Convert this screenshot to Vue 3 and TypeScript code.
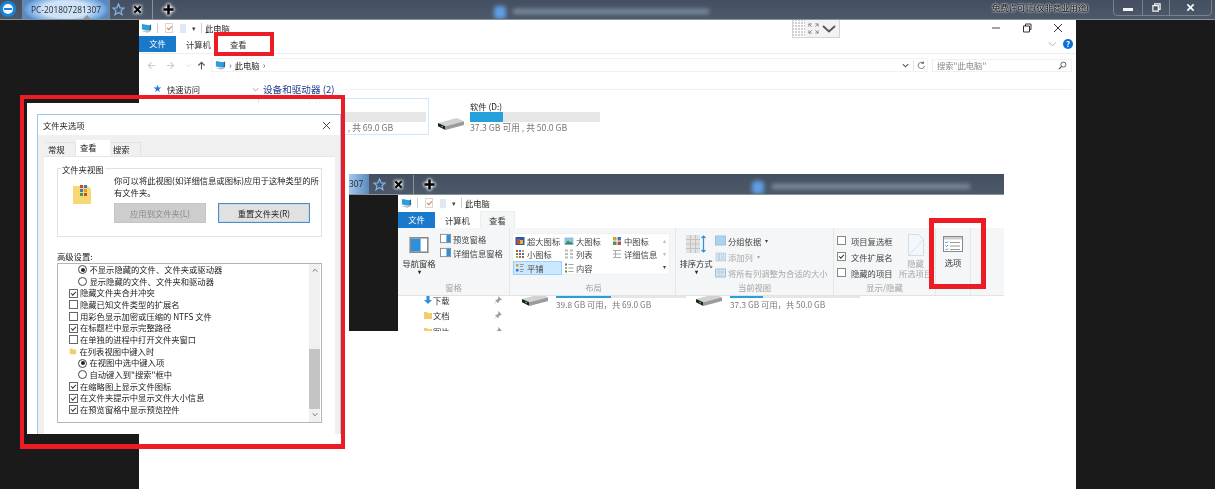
<template>
  <div class="screen">
    <svg class="defs" aria-hidden="true">
      <symbol id="pc" viewBox="0 0 12 12">
        <path d="M1 1l8 1.500v6L1 7z" fill="#2a9fdc" />
        <path d="M9 2.500l2 -1v6l-2 1z" fill="#16689c" />
        <path d="M1 9l6 1.500 4-1.500-5-1z" fill="#b9c0c6" />
      </symbol>
      <symbol id="drive" viewBox="0 0 30 14">
        <path d="M1 6.500L21 1l8 3.500L9 10z" fill="#d2d2d2" />
        <path d="M1 6.500L9 10v4L1 10z" fill="#1f1f1f" />
        <path d="M9 10L29 4.500v4L9 14z" fill="#9b9b9b" />
        <rect x="4.500" y="9.500" width="2" height="1.500" fill="#34c05a" />
      </symbol>
      <symbol id="star" viewBox="0 0 14 14">
        <path d="M7 1l1.700 4.200 4.300.300-3.300 2.800 1 4.300L7 10.300l-3.700 2.300 1-4.300L1 5.500l4.300-.300z" fill="none" stroke="#7fb4e6" stroke-width="1.300" />
      </symbol>
      <symbol id="tvx" viewBox="0 0 10 10">
        <path d="M1.500 1.500l7 7M8.500 1.500l-7 7" stroke="#050505" stroke-width="2.300" />
      </symbol>
      <symbol id="tvplus" viewBox="0 0 12 12">
        <path d="M6 .5v11M.5 6h11" stroke="#050505" stroke-width="2.800" />
      </symbol>
      <symbol id="xlg" viewBox="0 0 10 10">
        <rect x=".5" y="1" width="9" height="8" fill="#1e5fb0" />
        <rect x="2" y="3" width="3" height="5" fill="#d9442e" />
        <rect x="5" y="4" width="3" height="4" fill="#e6b52e" />
      </symbol>
      <symbol id="lg" viewBox="0 0 10 10">
        <rect x=".5" y="1.500" width="9" height="7" fill="#8fc4e8" />
        <path d="M.5 8.500L4 4.500l2 2 1-1 2.500 3z" fill="#3d8a5a" />
      </symbol>
      <symbol id="md" viewBox="0 0 10 10">
        <rect x="1" y="1" width="3.500" height="3.500" fill="#d9a02e" />
        <rect x="5.500" y="1" width="3.500" height="3.500" fill="#3b78c4" />
        <rect x="1" y="5.500" width="3.500" height="3.500" fill="#3b9a5c" />
        <rect x="5.500" y="5.500" width="3.500" height="3.500" fill="#c9483a" />
      </symbol>
      <symbol id="sm" viewBox="0 0 10 10">
        <g v-for="c in smallGrid" :key="c.k">
          <rect :x="c.x" :y="c.y" width="2" height="2" :fill="c.f" />
        </g>
      </symbol>
      <symbol id="list" viewBox="0 0 10 10">
        <path d="M1 1.500h3M1 5h3M1 8.500h3M6 1.500h3M6 5h3M6 8.500h3" stroke="#bbb" stroke-width="2" />
      </symbol>
      <symbol id="detail" viewBox="0 0 10 10">
        <path d="M1 1.500h8M1 5h8M1 8.500h8M3.500 1v8" stroke="#aaa" stroke-width="1" fill="none" />
      </symbol>
      <symbol id="tile" viewBox="0 0 10 10">
        <rect x="1" y="1" width="2.500" height="2.500" fill="#d9a02e" />
        <rect x="1" y="6" width="2.500" height="2.500" fill="#3b78c4" />
        <path d="M5 1.500h4M5 3.500h3M5 6.500h4M5 8.500h3" stroke="#888" stroke-width=".8" />
      </symbol>
      <symbol id="content" viewBox="0 0 10 10">
        <rect x="1" y=".5" width="2" height="2" fill="#3b78c4" />
        <rect x="1" y="4" width="2" height="2" fill="#d9a02e" />
        <rect x="1" y="7.500" width="2" height="2" fill="#3b9a5c" />
        <path d="M4.500 1.500h5M4.500 5h5M4.500 8.500h5" stroke="#999" stroke-width=".9" />
      </symbol>
      <symbol id="pane" viewBox="0 0 12 10">
        <rect x=".5" y=".5" width="11" height="9" fill="#fff" stroke="#8a8a8a" />
        <rect x="1" y="1" width="6" height="8" fill="#2e8fdc" />
      </symbol>
      <symbol id="pane-r" viewBox="0 0 12 10">
        <rect x=".5" y=".5" width="11" height="9" fill="#fff" stroke="#8a8a8a" />
        <rect x="7" y="1" width="4" height="8" fill="#2e8fdc" />
      </symbol>
      <symbol id="pin" viewBox="0 0 8 8">
        <path d="M4.500 .5l3 3-1.500.5-1.500 1.500-.3 1.500L1.500 4.300 3 4l1.500-1.500z M2.500 5.500L.5 7.500" fill="#9a9a9a" stroke="#9a9a9a" stroke-width=".5" />
      </symbol>
      <symbol id="folder" viewBox="0 0 10 10">
        <path d="M1 2h3l1 1h4v6H1z" fill="#f3cd6c" />
      </symbol>
      <symbol id="down" viewBox="0 0 10 10">
        <path d="M3.500 1h3v4H9L5 9 1 5h2.500z" fill="#2e8fdc" />
      </symbol>
    </svg>

    <header class="tv-bar">
      <span class="tv-logo"><i /></span>
      <div class="tv-tab">
        <span>PC-201807281307</span>
        <b class="tv-notch" />
      </div>
      <svg class="tv-star"><use href="#star" /></svg>
      <svg class="tv-x"><use href="#tvx" /></svg>
      <span class="tv-sep" />
      <svg class="tv-plus"><use href="#tvplus" /></svg>
      <span class="tv-blur-icon tv-blur-main" />
      <span class="tv-blur-text" />
      <span class="tv-license">免费许可证(仅非商业用途)</span>
      <div class="tv-winbox">
        <span class="wb wb-min"><i /></span>
        <span class="wb wb-max">
          <svg viewBox="0 0 10 10"><path d="M3 3V1h6v6H7M1 3h6v6H1z" fill="none" stroke="#f4f4f4" stroke-width="1.400" /></svg>
        </span>
        <span class="wb wb-close">
          <svg viewBox="0 0 10 10"><path d="M1.500 1.500l7 7M8.500 1.500l-7 7" stroke="#f4f4f4" stroke-width="2" /></svg>
        </span>
      </div>
    </header>

    <main class="desk">
      <section class="explorer">
        <div class="title-row">
          <svg class="ic12"><use href="#pc" /></svg>
          <span class="qa-sep" />
          <span class="qa-doc"><i /></span>
          <span class="qa-page" />
          <span class="qa-caret">▾</span>
          <span class="qa-sep" />
          <span class="crumb-title">此电脑</span>
          <span class="win-ctrls">
            <svg viewBox="0 0 10 10"><path d="M1 5h8" stroke="#444" stroke-width="1" /></svg>
            <svg viewBox="0 0 10 10"><path d="M1.500 3h6v6h-6zM3.500 3V1h5.500v5.500H7.500" fill="none" stroke="#333" /></svg>
            <svg viewBox="0 0 10 10"><path d="M1 1l8 8M9 1l-8 8" stroke="#333" /></svg>
          </span>
        </div>
        <div class="tab-row">
          <span class="tab-file">文件</span>
          <span class="tab">计算机</span>
          <span class="tab tab-view">查看</span>
          <span class="tab-right">
            <svg viewBox="0 0 10 6"><path d="M1 1l4 4 4-4" fill="none" stroke="#aaa" /></svg>
            <b class="help">?</b>
          </span>
        </div>
        <div class="addr-row">
          <svg class="nav" viewBox="0 0 10 10"><path d="M9 5H1.500M5 1.500L1.500 5 5 8.500" fill="none" stroke="#ccc" stroke-width="1.200" /></svg>
          <svg class="nav" viewBox="0 0 10 10"><path d="M1 5h7.500M5 1.500L8.500 5 5 8.500" fill="none" stroke="#ccc" stroke-width="1.200" /></svg>
          <svg class="nav nav-sm" viewBox="0 0 10 10"><path d="M2 3.500l3 3 3-3" fill="none" stroke="#ccc" /></svg>
          <svg class="nav nav-up" viewBox="0 0 10 10"><path d="M5 9.500V1.500M1.500 5L5 1.500 8.500 5" fill="none" stroke="#555" stroke-width="1.200" /></svg>
          <div class="addr-box">
            <svg class="ic12"><use href="#pc" /></svg>
            <span class="chev">›</span>
            <span>此电脑</span>
            <span class="chev">›</span>
            <span class="addr-tools">
              <svg viewBox="0 0 10 10"><path d="M2 3.500l3 3 3-3" fill="none" stroke="#555" stroke-width="1.200" /></svg>
              <i />
              <svg viewBox="0 0 10 10"><path d="M8.300 5.500A3.500 3.500 0 1 1 7 2.200M7.200 .5v2.300H5" fill="none" stroke="#666" /></svg>
            </span>
          </div>
          <div class="search-box">
            <span>搜索"此电脑"</span>
            <svg viewBox="0 0 10 10"><circle cx="6" cy="4" r="2.800" fill="none" stroke="#555" /><path d="M4 6L1 9" stroke="#555" stroke-width="1.300" /></svg>
          </div>
        </div>
        <div class="exp-body">
          <aside class="side">
            <div class="side-row"><span class="side-star">★</span>快速访问</div>
            <div class="side-row side-next"><svg class="ic10"><use href="#folder" /></svg></div>
          </aside>
          <div class="drives">
            <div class="drive-head">
              <svg viewBox="0 0 10 6"><path d="M1 1l4 4 4-4" fill="none" stroke="#888" /></svg>
              <span>设备和驱动器 (2)</span>
              <i />
            </div>
            <div class="tiles">
              <div
                v-for="d in drives"
                :key="d.name"
                class="tile"
                :class="{ 'tile-on': d.selected }"
              >
                <svg class="drive-ic"><use href="#drive" /></svg>
                <div class="tile-info">
                  <div class="tile-name">{{ d.name }}</div>
                  <div class="bar"><div class="bar-fill" :style="{ width: d.used + '%' }" /></div>
                  <div class="tile-size">{{ d.size }}</div>
                </div>
              </div>
            </div>
          </div>
        </div>
      </section>
    </main>

    <!-- window handle of the remote session -->
    <div class="tv-handle">
      <span class="tv-dots" />
      <svg viewBox="0 0 12 12"><path d="M1 4V1h3M1 1l3 3M8 1h3v3M11 1L8 4M11 8v3H8M11 11L8 8M4 11H1V8M1 11l3-3" fill="none" stroke="#777" stroke-width=".9" /></svg>
      <svg viewBox="0 0 14 8"><path d="M1 1l6 5.500L13 1" fill="none" stroke="#555" stroke-width="1.800" /></svg>
    </div>

    <!-- pasted screenshot: dialog -->
    <div class="dialog-sheet">
      <div class="dialog">
        <div class="dlg-title">
          <span>文件夹选项</span>
          <svg viewBox="0 0 10 10"><path d="M1 1l8 8M9 1l-8 8" stroke="#333" /></svg>
        </div>
        <div class="dlg-body">
          <div class="dlg-tabs">
            <span class="dlg-tab">常规</span>
            <span class="dlg-tab dlg-tab-on">查看</span>
            <span class="dlg-tab">搜索</span>
          </div>
          <div class="dlg-panel">
            <fieldset class="group">
              <legend>文件夹视图</legend>
              <div class="group-inner">
                <svg class="group-ic" viewBox="0 0 18 20">
                  <path d="M0 2h15l3 3v15H0z" fill="#f8d775" />
                  <rect x="7" y="1" width="3" height="3" fill="#c9483a" />
                  <rect x="11" y="1" width="3" height="3" fill="#3b78c4" />
                  <rect x="7" y="5" width="3" height="3" fill="#3b78c4" />
                  <rect x="11" y="5" width="3" height="3" fill="#d9a02e" />
                  <rect x="7" y="9" width="3" height="3" fill="#3b9a5c" />
                  <rect x="11" y="9" width="3" height="3" fill="#c9483a" />
                </svg>
                <div class="group-main">
                  <p>你可以将此视图(如详细信息或图标)应用于这种类型的所<br>有文件夹。</p>
                  <div class="group-btns">
                    <button class="btn btn-off">应用到文件夹(L)</button>
                    <button class="btn btn-on">重置文件夹(R)</button>
                  </div>
                </div>
              </div>
            </fieldset>
            <div class="adv-label">高级设置:</div>
            <div class="adv-box">
              <ul class="adv-rows">
                <li v-for="r in advRows" :key="r.text" :class="'row-' + r.kind">
                  <span v-if="r.kind === 'radio'" class="radio" :class="{ on: r.on }" />
                  <span v-else-if="r.kind === 'check'" class="check" :class="{ on: r.on }" />
                  <svg v-else class="ic8"><use href="#folder" /></svg>
                  {{ r.text }}
                </li>
              </ul>
              <div class="scroll">
                <svg viewBox="0 0 10 6"><path d="M2 4.500l3-3 3 3" fill="none" stroke="#555" /></svg>
                <span class="thumb" />
                <svg viewBox="0 0 10 6"><path d="M2 1.500l3 3 3-3" fill="none" stroke="#555" /></svg>
              </div>
            </div>
          </div>
        </div>
      </div>
    </div>

    <!-- pasted screenshot: explorer ribbon -->
    <div class="nested">
      <div class="tv-bar nested-bar">
        <div class="nested-tab">307</div>
        <svg class="tv-star"><use href="#star" /></svg>
        <svg class="tv-x"><use href="#tvx" /></svg>
        <span class="tv-sep" />
        <svg class="tv-plus"><use href="#tvplus" /></svg>
        <span class="tv-blur-icon nested-blur" />
        <span class="tv-blur-text nested-text" />
      </div>
      <div class="nested-main">
        <div class="nested-black" />
        <div class="nested-exp">
          <div class="title-row nested-title">
            <svg class="ic12"><use href="#pc" /></svg>
            <span class="qa-sep" />
            <span class="qa-doc"><i /></span>
            <span class="qa-page" />
            <span class="qa-caret">▾</span>
            <span class="qa-sep" />
            <span class="crumb-title">此电脑</span>
          </div>
          <div class="tab-row nested-tabs">
            <span class="tab-file">文件</span>
            <span class="tab">计算机</span>
            <span class="tab tab-nview">查看</span>
          </div>
          <div class="ribbon">
            <div class="rb-group rb-pane">
              <div class="rb-items">
                <div class="rb-big">
                  <svg class="big-pane"><use href="#pane" /></svg>
                  <span>导航窗格</span>
                  <b class="dd">▾</b>
                </div>
                <div class="rb-col">
                  <div class="rb-small"><svg class="ic12"><use href="#pane-r" /></svg>预览窗格</div>
                  <div class="rb-small"><svg class="ic12"><use href="#pane-r" /></svg>详细信息窗格</div>
                </div>
              </div>
              <div class="rb-label">窗格</div>
            </div>
            <div class="rb-group rb-layout">
              <div class="gallery">
                <div class="gal-grid">
                  <div
                    v-for="g in layouts"
                    :key="g.text"
                    class="gal-cell"
                    :class="{ 'gal-on': g.on }"
                  >
                    <svg class="ic10"><use :href="'#' + g.icon" /></svg>
                    <span>{{ g.text }}</span>
                  </div>
                </div>
                <div class="gal-scroll">
                  <span>▴</span><span>▾</span><span class="gal-more">▾</span>
                </div>
              </div>
              <div class="rb-label">布局</div>
            </div>
            <div class="rb-group rb-current">
              <div class="rb-items">
                <div class="rb-big rb-sort">
                  <svg class="big-sort" viewBox="0 0 20 18">
                    <rect x="0" y="0" width="14" height="18" fill="#e2e2e2" />
                    <path d="M0 4.500h14M0 9h14M0 13.500h14M4.500 0v18M9.500 0v18" stroke="#bdbdbd" stroke-width=".8" />
                    <path d="M17.500 1v16M15.500 3l2-2 2 2M15.500 15l2 2 2-2" fill="none" stroke="#2e8fdc" stroke-width="1.200" />
                  </svg>
                  <span>排序方式</span>
                  <b class="dd">▾</b>
                </div>
                <div class="rb-col rb-col3">
                  <div class="rb-small"><svg class="ic11" viewBox="0 0 11 11"><rect x=".5" y="1" width="10" height="9" fill="#a8d4f2" stroke="#a9bfd0" /></svg>分组依据 <em>▾</em></div>
                  <div class="rb-small rb-dim"><svg class="ic11" viewBox="0 0 11 11"><path d="M1 2h2.500v8H1zM4.500 2H7v8H4.500zM8 2h2.500v8H8z" fill="#d6e7f4" stroke="#a9bfd0" stroke-width=".6" /></svg>添加列 <em>▾</em></div>
                  <div class="rb-small rb-dim"><svg class="ic11" viewBox="0 0 11 11"><rect x=".5" y="2" width="10" height="8" fill="#d6e7f4" stroke="#a9bfd0" /><path d="M.5 5h10M4 2v8M7 2v8" stroke="#a9bfd0" stroke-width=".6" /></svg>将所有列调整为合适的大小</div>
                </div>
              </div>
              <div class="rb-label">当前视图</div>
            </div>
            <div class="rb-group rb-show">
              <div class="rb-items">
                <div class="rb-col rb-col3">
                  <label v-for="o in showOptions" :key="o.text" class="rb-check">
                    <span class="check check-sm" :class="{ on: o.on }" />{{ o.text }}
                  </label>
                </div>
                <div class="rb-big rb-hide">
                  <svg class="big-hide" viewBox="0 0 16 22"><path d="M.5 .5h10l5 5v16H.5z" fill="#f4f8fc" stroke="#d5dce4" /><path d="M.5 21.500L15.500 5.500" stroke="#cfe3f4" /></svg>
                  <span>隐藏</span>
                  <span>所选项目</span>
                </div>
              </div>
              <div class="rb-label">显示/隐藏</div>
            </div>
            <div class="rb-group rb-opts">
              <div class="rb-big rb-opt">
                <svg class="big-opt" viewBox="0 0 20 16">
                  <rect x=".5" y=".5" width="19" height="15" fill="#fff" stroke="#8a8a8a" />
                  <rect x="1" y="1" width="18" height="2.500" fill="#cfcfcf" />
                  <path d="M2.500 6l1 1 1.500-1.500M2.500 9.500l1 1 1.500-1.500M2.500 13l1 1 1.500-1.500" fill="none" stroke="#2e8fdc" />
                  <path d="M7 6.500h10M7 10h10M7 13.500h10" stroke="#999" />
                </svg>
                <span>选项</span>
              </div>
            </div>
            <div class="rb-fill" />
          </div>
          <div class="nested-content">
            <div class="nested-side">
              <div v-for="s in nestedSide" :key="s.text" class="ns-row">
                <svg class="ic10"><use :href="'#' + s.icon" /></svg>
                <span>{{ s.text }}</span>
                <svg class="ic8 ns-pin"><use href="#pin" /></svg>
              </div>
            </div>
            <div v-for="d in nestedDrives" :key="d.size" class="ntile">
              <svg class="drive-ic"><use href="#drive" /></svg>
              <div class="ntile-info">
                <div class="bar"><div class="bar-fill" :style="{ width: d.used + '%' }" /></div>
                <div class="tile-size">{{ d.size }}</div>
              </div>
            </div>
          </div>
        </div>
      </div>
    </div>

    <!-- annotations -->
    <span class="mark mark-view" />
    <span class="mark mark-dialog" />
    <span class="mark mark-options" />
  </div>
</template>

<script setup lang="ts">
type RowKind = 'radio' | 'check' | 'folder'

interface AdvRow {
  kind: RowKind
  text: string
  on?: boolean
}

const drives = [
  { name: '本地磁盘 (C:)', size: '39.8 GB 可用 , 共 69.0 GB', used: 2, selected: true },
  { name: '软件 (D:)', size: '37.3 GB 可用 , 共 50.0 GB', used: 25, selected: false }
]

const nestedDrives = [
  { size: '39.8 GB 可用，共 69.0 GB', used: 42 },
  { size: '37.3 GB 可用，共 50.0 GB', used: 25 }
]

const nestedSide = [
  { text: '下载', icon: 'down' },
  { text: '文档', icon: 'folder' },
  { text: '图片', icon: 'folder' }
]

const advRows: AdvRow[] = [
  { kind: 'radio', on: true, text: '不显示隐藏的文件、文件夹或驱动器' },
  { kind: 'radio', text: '显示隐藏的文件、文件夹和驱动器' },
  { kind: 'check', on: true, text: '隐藏文件夹合并冲突' },
  { kind: 'check', text: '隐藏已知文件类型的扩展名' },
  { kind: 'check', text: '用彩色显示加密或压缩的 NTFS 文件' },
  { kind: 'check', on: true, text: '在标题栏中显示完整路径' },
  { kind: 'check', text: '在单独的进程中打开文件夹窗口' },
  { kind: 'folder', text: '在列表视图中键入时' },
  { kind: 'radio', on: true, text: '在视图中选中键入项' },
  { kind: 'radio', text: '自动键入到"搜索"框中' },
  { kind: 'check', on: true, text: '在缩略图上显示文件图标' },
  { kind: 'check', on: true, text: '在文件夹提示中显示文件大小信息' },
  { kind: 'check', on: true, text: '在预览窗格中显示预览控件' }
]

const layouts = [
  { text: '超大图标', icon: 'xlg' },
  { text: '大图标', icon: 'lg' },
  { text: '中图标', icon: 'md' },
  { text: '小图标', icon: 'sm' },
  { text: '列表', icon: 'list' },
  { text: '详细信息', icon: 'detail' },
  { text: '平铺', icon: 'tile', on: true },
  { text: '内容', icon: 'content' }
]

const showOptions = [
  { text: '项目复选框', on: false },
  { text: '文件扩展名', on: true },
  { text: '隐藏的项目', on: false }
]

const colors = ['#c9483a', '#3b78c4', '#d9a02e', '#3b9a5c']
const smallGrid = Array.from({ length: 9 }, (_, i) => ({
  k: i,
  x: 1 + (i % 3) * 3,
  y: 1 + Math.floor(i / 3) * 3,
  f: colors[i % 4]
}))
</script>

<style>
html,
body {
  margin: 0;
  background: #1a1a1a;
}
</style>

<style scoped>
.screen {
  position: relative;
  width: 1215px;
  height: 489px;
  overflow: hidden;
  display: flex;
  flex-direction: column;
  background: #1a1a1a;
  font-family: "Noto Sans CJK SC", "Noto Sans", sans-serif;
  font-size: 8.3px;
  color: #222;
  filter: blur(0.4px);
}

.defs {
  position: absolute;
  width: 0;
  height: 0;
}

.ic8 { width: 8px; height: 8px; flex: none; }
.ic10 { width: 10px; height: 10px; flex: none; }
.ic11 { width: 11px; height: 11px; flex: none; }
.ic12 { width: 11px; height: 11px; flex: none; }

/* remote session bar */
.tv-bar {
  height: 20px;
  flex: none;
  box-sizing: border-box;
  display: flex;
  align-items: center;
  position: relative;
  background: linear-gradient(#445062, #4d5968);
  border-bottom: 1px solid #8a929c;
  overflow: hidden;
}

.tv-logo {
  width: 16px;
  height: 16px;
  margin: -2px 6px 0 0;
  border-radius: 50%;
  background: #1683d8;
  display: flex;
  align-items: center;
  justify-content: center;
  flex: none;
}

.tv-logo i {
  width: 10px;
  height: 10px;
  border-radius: 50%;
  background: #fff;
  position: relative;
}

.tv-logo i::after {
  content: "";
  position: absolute;
  left: 1px;
  right: 1px;
  top: 4px;
  height: 2px;
  background: #1683d8;
}

.tv-tab {
  width: 88px;
  height: 19px;
  flex: none;
  position: relative;
  display: flex;
  align-items: center;
  justify-content: center;
  font-size: 8.3px;
  font-family: "Open Sans", "Noto Sans", sans-serif;
  color: #1d2833;
  background: radial-gradient(ellipse 50% 80% at 50% 50%, #cfe2f6 55%, #6fa7e2 90%, #5a89bd 100%);
  border-left: 1px solid #7d8793;
  border-right: 1px solid #7d8793;
  box-sizing: border-box;
}

.tv-notch {
  position: absolute;
  left: 60px;
  bottom: 0;
  border: 4px solid transparent;
  border-top: 0;
  border-bottom-color: #8a929c;
}

.tv-star {
  width: 13px;
  height: 13px;
  margin-left: 2px;
  flex: none;
}

.tv-x {
  width: 9px;
  height: 9px;
  margin-left: 8px;
  flex: none;
  filter: drop-shadow(0 0 1.5px #fff) drop-shadow(0 0 1.5px #fff);
}

.tv-sep {
  width: 1px;
  height: 19px;
  margin-left: 10px;
  background: #8a929c;
  flex: none;
}

.tv-plus {
  width: 11px;
  height: 11px;
  margin-left: 10px;
  flex: none;
  filter: drop-shadow(0 0 1.5px #fff) drop-shadow(0 0 1.5px #fff);
}

.tv-blur-icon {
  position: absolute;
  top: 6px;
  width: 12px;
  height: 13px;
  border-radius: 4px;
  background: #5f9fe4;
  filter: blur(2px);
}

.tv-blur-main { left: 494px; }

.tv-blur-text {
  position: absolute;
  left: 513px;
  top: 9px;
  width: 196px;
  height: 5px;
  background: #7d8ca3;
  filter: blur(2px);
}

.tv-license {
  position: absolute;
  left: 992px;
  top: 1px;
  font-size: 8.3px;
  color: #050505;
  text-shadow: 0 0 2px #fff, 0 0 2px #fff;
}

.tv-winbox {
  position: absolute;
  left: 1113px;
  top: -1px;
  width: 99px;
  height: 17px;
  box-sizing: border-box;
  display: flex;
  border: 1px solid #77828f;
  border-radius: 0 0 4px 4px;
}

.wb {
  display: flex;
  align-items: center;
  justify-content: center;
  border-right: 1px solid #77828f;
}

.wb svg {
  width: 9px;
  height: 9px;
}

.wb-min { width: 28px; }
.wb-max { width: 26px; }
.wb-close {
  flex: 1;
  border-right: 0;
}

.wb-min i {
  width: 10px;
  height: 3px;
  margin-top: 3px;
  background: #f4f4f4;
}

/* main window */
.desk {
  flex: 1;
  display: flex;
  justify-content: center;
  min-height: 0;
}

.explorer {
  width: 937px;
  background: #fff;
  display: flex;
  flex-direction: column;
}

.title-row {
  height: 16px;
  flex: none;
  display: flex;
  align-items: center;
  padding-left: 2px;
}

.qa-sep {
  width: 1px;
  height: 10px;
  margin: 0 5px;
  background: #ccc;
}

.qa-doc {
  width: 8px;
  height: 10px;
  border: 1px solid #d8d8d8;
  box-sizing: border-box;
  margin-left: 2px;
  position: relative;
}

.qa-doc i {
  position: absolute;
  left: 1px;
  top: 2px;
  width: 4px;
  height: 2px;
  border-left: 1px solid #e8773c;
  border-bottom: 1px solid #e8773c;
  transform: rotate(-45deg);
}

.qa-page {
  width: 6px;
  height: 9px;
  margin-left: 7px;
  background: #dfe8f3;
}

.qa-caret {
  font-size: 7px;
  color: #444;
  margin-left: 6px;
}

.title-row .qa-caret + .qa-sep {
  margin: 0 3px 0 5px;
}

.win-ctrls {
  margin-left: auto;
  display: flex;
  gap: 21px;
  padding-right: 13px;
}

.win-ctrls svg {
  width: 10px;
  height: 10px;
}

.tab-row {
  height: 16px;
  flex: none;
  display: flex;
  align-items: center;
  position: relative;
}

.tab-file {
  width: 37px;
  height: 16px;
  line-height: 15px;
  text-align: center;
  color: #fff;
  background: #1979ca;
  font-size: 8.3px;
}

.tab {
  margin-left: 10px;
  color: #333;
}

.tab-view {
  margin-left: 19px;
}

.tab-right {
  margin-left: auto;
  display: flex;
  align-items: center;
  gap: 6px;
  padding-right: 3px;
}

.tab-right svg {
  width: 9px;
  height: 6px;
}

.help {
  width: 10px;
  height: 10px;
  line-height: 10px;
  border-radius: 50%;
  background: #0d6fd6;
  color: #fff;
  text-align: center;
  font-size: 8px;
}

.addr-row {
  height: 16px;
  margin-top: 5px;
  flex: none;
  display: flex;
  align-items: center;
  padding-left: 8px;
  position: relative;
}

.addr-row::before {
  content: "";
  position: absolute;
  left: 0;
  right: 0;
  top: -4px;
  height: 1px;
  background: #eee;
}

.nav {
  width: 9px;
  height: 9px;
  margin-right: 10px;
  flex: none;
}

.nav-sm {
  width: 7px;
  margin-right: 5px;
}

.nav-up {
  margin-right: 5px;
}

.addr-box {
  width: 717px;
  height: 14px;
  box-sizing: border-box;
  display: flex;
  align-items: center;
  gap: 3px;
  padding-left: 3px;
  color: #222;
  border: 1px solid #f2f2f2;
}

.chev {
  color: #666;
  font-size: 9px;
  line-height: 1;
}

.addr-tools {
  margin-left: auto;
  display: flex;
  align-items: center;
  gap: 3px;
  padding-right: 1px;
}

.addr-tools svg {
  width: 9px;
  height: 9px;
}

.addr-tools i {
  width: 1px;
  height: 11px;
  background: #e5e5e5;
}

.search-box {
  width: 140px;
  height: 13px;
  margin-left: 4px;
  box-sizing: border-box;
  display: flex;
  align-items: center;
  justify-content: space-between;
  padding: 0 4px;
  color: #888;
  border: 1px solid #f0f0f0;
}

.search-box svg {
  width: 9px;
  height: 9px;
}

.exp-body {
  display: flex;
  padding-top: 9px;
}

.side {
  width: 107px;
  flex: none;
  padding: 1px 0 0 14px;
  box-sizing: border-box;
}

.side-row {
  display: flex;
  align-items: center;
  gap: 3px;
  height: 12px;
}

.side-star {
  color: #2577d0;
  font-size: 10px;
  line-height: 1;
  margin-right: 2px;
  font-family: "DejaVu Sans", sans-serif;
}

.side-next {
  margin: 5px 0 0 10px;
}

.drives {
  flex: 1;
  min-width: 0;
  padding-left: 1px;
}

.drive-head {
  display: flex;
  align-items: center;
  height: 14px;
  padding-left: 5px;
  font-size: 9.6px;
  color: #1e3c8c;
}

.drive-head svg {
  width: 7px;
  height: 5px;
  margin-right: 4px;
}

.drive-head i {
  flex: 1;
  height: 1px;
  margin: 0 5px;
  background: #eef0f2;
}

.tiles {
  display: flex;
  gap: 3px;
  margin-top: 2px;
  padding-left: 11px;
}

.tile {
  width: 171px;
  height: 37px;
  box-sizing: border-box;
  display: flex;
  align-items: flex-start;
  border: 1px solid transparent;
}

.tile-on {
  border-color: #cde8ff;
}

.drive-ic {
  width: 28px;
  height: 13px;
  margin: 18px 0 0 4px;
  flex: none;
}

.tile-info {
  margin: 1px 0 0 5px;
}

.tile-name {
  height: 12px;
  line-height: 12px;
}

.bar {
  width: 130px;
  height: 10px;
  background: #e6e6e6;
}

.bar-fill {
  height: 100%;
  background: #26a0da;
}

.tile-size {
  line-height: 12px;
  white-space: nowrap;
  color: #777;
}

.tile .tile-size {
  font-size: 8.7px;
}

/* handle hanging from the session bar */
.tv-handle {
  position: absolute;
  left: 792px;
  top: 20px;
  width: 48px;
  height: 18px;
  box-sizing: border-box;
  display: flex;
  align-items: center;
  background: #f3f3f3;
  border: 1px solid #d4d4d4;
  border-top: 0;
}

.tv-dots {
  width: 12px;
  height: 100%;
  margin-right: 3px;
  background-color: #cfcfcf;
  background-image: radial-gradient(#fff 1px, transparent 1.2px);
  background-size: 3px 3px;
}

.tv-handle svg:nth-child(2) {
  width: 11px;
  height: 11px;
  margin-right: 3px;
}

.tv-handle svg:nth-child(3) {
  width: 14px;
  height: 8px;
}

/* dialog screenshot */
.dialog-sheet {
  position: absolute;
  left: 27px;
  top: 103px;
  width: 316px;
  height: 331px;
  box-sizing: border-box;
  padding: 11px 0 0 10px;
  background: #fff;
  overflow: hidden;
}

.dialog {
  width: 304px;
  height: 330px;
  box-sizing: border-box;
  display: flex;
  flex-direction: column;
  background: #fff;
  border: 1px solid #9cc7ea;
  border-bottom: 0;
}

.dlg-title {
  height: 20px;
  flex: none;
  display: flex;
  align-items: center;
  justify-content: space-between;
  padding: 0 9px 0 5px;
}

.dlg-title svg {
  width: 9px;
  height: 9px;
}

.dlg-body {
  flex: 1;
  background: #f0f0f0;
  padding: 5px 5px 0 6px;
  display: flex;
  flex-direction: column;
}

.dlg-tabs {
  height: 16px;
  display: flex;
  align-items: flex-end;
  padding-left: 1px;
}

.dlg-tab {
  height: 14px;
  line-height: 13px;
  width: 31px;
  padding-left: 3px;
  box-sizing: border-box;
  border: 1px solid #e3e3e3;
  border-bottom: 0;
  border-left: 0;
}

.dlg-tab-on {
  width: 34px;
  height: 16px;
  line-height: 14px;
  padding-left: 4px;
  background: #fff;
  border: 0;
}

.dlg-panel {
  flex: 1;
  background: #fff;
  border-top: 1px solid #e6e6e6;
  padding: 11px 13px 0 13px;
}

.group {
  margin: 0;
  padding: 0;
  height: 69px;
  box-sizing: border-box;
  border: 1px solid #e2e2e2;
  position: relative;
}

.group legend {
  position: absolute;
  left: 3px;
  top: -5px;
  padding: 0 1px;
  height: 12px;
  line-height: 11px;
  background: #fff;
}

.group-inner {
  display: flex;
  padding: 5px 0 0 15px;
}

.group-ic {
  width: 18px;
  height: 20px;
  margin: 10px 23px 0 0;
  flex: none;
}

.group-main p {
  margin: 0;
  line-height: 12px;
  white-space: nowrap;
}

.group-btns {
  display: flex;
  gap: 12px;
  margin-top: 5px;
}

.btn {
  width: 92px;
  height: 20px;
  padding: 0;
  box-sizing: border-box;
  font: inherit;
  border: 1px solid #adadad;
  background: #e1e1e1;
  color: #222;
}

.btn-off {
  background: #cdcdcd;
  border-color: #c4c4c4;
  color: #8a8a8a;
}

.btn-on {
  border: 1px solid #4f8cc4;
  box-shadow: inset 0 0 0 1px #c5d9ec;
}

.adv-label {
  margin-top: 13px;
  height: 12px;
  line-height: 12px;
}

.adv-box {
  margin-top: 1px;
  height: 160px;
  box-sizing: border-box;
  display: flex;
  border: 1px solid #b5b5b5;
  background: #fff;
}

.adv-rows {
  flex: 1;
  margin: 0;
  padding: 0;
  list-style: none;
}

.adv-rows li {
  height: 11.67px;
  line-height: 11.67px;
  display: flex;
  align-items: center;
  gap: 2.5px;
  white-space: nowrap;
}

.row-radio { padding-left: 20px; }
.row-check { padding-left: 10.5px; }
.row-folder { padding-left: 11px; }

.radio {
  width: 9px;
  height: 9px;
  box-sizing: border-box;
  border: 1px solid #444;
  border-radius: 50%;
  background: #fff;
  flex: none;
  position: relative;
}

.radio.on::after {
  content: "";
  position: absolute;
  inset: 1.5px;
  border-radius: 50%;
  background: #222;
}

.check {
  width: 9px;
  height: 9px;
  box-sizing: border-box;
  border: 1px solid #666;
  background: #fff;
  flex: none;
  position: relative;
}

.check.on::after {
  content: "";
  position: absolute;
  left: 1px;
  top: 0;
  width: 4px;
  height: 2px;
  border-left: 1px solid #333;
  border-bottom: 1px solid #333;
  transform: rotate(-45deg) translate(-1px, 1px);
}

.check-sm {
  border-color: #888;
  margin-right: 5px;
}

.scroll {
  width: 11px;
  margin-right: 1px;
  flex: none;
  display: flex;
  flex-direction: column;
  align-items: center;
  background: #f0f0f0;
  padding-top: 4px;
  box-sizing: border-box;
}

.scroll svg {
  width: 8px;
  height: 5px;
  flex: none;
}

.thumb {
  width: 100%;
  height: 60px;
  margin: 76px 0 3px;
  background: #c4c4c4;
  flex: none;
}

/* ribbon screenshot */
.nested {
  position: absolute;
  left: 349px;
  top: 174px;
  width: 655px;
  height: 157px;
  display: flex;
  flex-direction: column;
}

.nested-bar {
  height: 21px;
}

.nested-tab {
  width: 20px;
  height: 100%;
  line-height: 20px;
  color: #1d2833;
  font-family: "Open Sans", "Noto Sans", sans-serif;
  background: linear-gradient(90deg, #a5c8ee, #5a89bd);
  flex: none;
}

.nested-bar .tv-star {
  margin-left: 4px;
}

.nested-blur {
  left: 403px;
  top: 7px;
}

.nested-text {
  left: 423px;
  top: 10px;
  width: 198px;
}

.nested-main {
  flex: 1;
  min-height: 0;
  display: flex;
}

.nested-black {
  width: 49px;
  flex: none;
  background: #1a1a1a;
}

.nested-exp {
  flex: 1;
  min-width: 0;
  background: #fff;
  display: flex;
  flex-direction: column;
  overflow: hidden;
}

.nested-title {
  padding-left: 3px;
}

.nested-tabs {
  height: 17px;
}

.tab-nview {
  width: 35px;
  height: 17px;
  line-height: 16px;
  margin-left: 10px;
  text-align: center;
  background: #f5f6f7;
  border: 1px solid #eee;
  border-bottom: 0;
  box-sizing: border-box;
}

.ribbon {
  height: 68px;
  flex: none;
  display: flex;
  background: #f5f6f7;
  border-bottom: 1px solid #e2e3e4;
  box-sizing: border-box;
  position: relative;
  z-index: 1;
}

.rb-group {
  flex: none;
  box-sizing: border-box;
  display: flex;
  flex-direction: column;
  border-right: 1px solid #e6e7e8;
}

.rb-items {
  flex: 1;
  display: flex;
}

.rb-label {
  height: 13px;
  line-height: 11px;
  text-align: center;
  color: #a3a3a3;
  flex: none;
}

.rb-pane { width: 112px; }
.rb-layout { width: 166px; }
.rb-current { width: 158px; }
.rb-show { width: 102px; }
.rb-opts { width: 35px; padding-top: 8px; }
.rb-fill { flex: 1; }

.rb-big {
  display: flex;
  flex-direction: column;
  align-items: center;
  position: relative;
  line-height: 11px;
  color: #333;
  white-space: nowrap;
}

.rb-pane .rb-big {
  width: 42px;
  padding-top: 9px;
}

.big-pane {
  width: 20px;
  height: 16px;
  margin-bottom: 5px;
}

.dd {
  font-size: 6px;
  line-height: 5px;
  color: #222;
}

.rb-col {
  display: flex;
  flex-direction: column;
  gap: 3px;
  padding-top: 5px;
}

.rb-small {
  height: 11px;
  display: flex;
  align-items: center;
  gap: 2px;
  white-space: pre;
  color: #444;
}

.rb-layout {
  padding: 5px 0 0 2px;
}

.gallery {
  width: 158px;
  height: 42px;
  box-sizing: border-box;
  display: flex;
  background: #fff;
  border: 1px solid #f0f0f0;
}

.gal-grid {
  flex: 1;
  display: grid;
  grid-template-columns: 49px 48px 49px;
  grid-auto-rows: 13.5px;
}

.gal-cell {
  display: flex;
  align-items: center;
  gap: 2px;
  padding-left: 2px;
  white-space: nowrap;
  color: #444;
  box-sizing: border-box;
}

.gal-on {
  background: #cce8ff;
  border: 1px solid #99d1ff;
  padding-left: 1px;
}

.gal-scroll {
  width: 11px;
  display: flex;
  flex-direction: column;
  align-items: center;
  justify-content: space-around;
  font-size: 6px;
  line-height: 1;
  color: #bbb;
}

.gal-more {
  color: #444;
}

.rb-layout .rb-label {
  margin-top: auto;
}

.rb-current .rb-items {
  padding-left: 3px;
}

.rb-sort {
  width: 34px;
  padding-top: 7px;
}

.big-sort {
  width: 20px;
  height: 18px;
  margin-bottom: 5px;
}

.rb-col3 {
  gap: 5px;
  padding-top: 7px;
}

.rb-current .rb-col3 {
  margin-left: 2px;
}

.rb-small em {
  font-style: normal;
  font-size: 6px;
}

.rb-dim {
  color: #a8a8a8;
}

.rb-check {
  height: 11px;
  display: flex;
  align-items: center;
  white-space: nowrap;
  color: #444;
}

.rb-show .rb-items {
  padding-left: 3px;
}

.rb-hide {
  width: 36px;
  margin-left: 5px;
  padding-top: 6px;
  color: #a8a8a8;
  line-height: 10px;
}

.big-hide {
  width: 16px;
  height: 22px;
  margin-bottom: 2px;
}

.rb-opt {
  padding-top: 0;
}

.big-opt {
  width: 20px;
  height: 16px;
  margin-bottom: 5px;
}

.nested-content {
  display: flex;
  margin-top: -2px;
}

.nested-side {
  width: 123px;
  flex: none;
  padding: 0 19px 0 25px;
  box-sizing: border-box;
}

.ns-row {
  height: 15.5px;
  display: flex;
  align-items: center;
  white-space: nowrap;
  color: #333;
}

.ns-row:first-child {
  margin-top: -2px;
}

.ns-pin {
  margin-left: auto;
}

.ntile {
  width: 174px;
  flex: none;
  display: flex;
}

.ntile .drive-ic {
  margin: -1px 0 0 0;
}

.ntile-info {
  margin-left: 7px;
}

.ntile .bar {
  height: 3.5px;
}

/* red annotation frames */
.mark {
  position: absolute;
  z-index: 2;
  box-sizing: border-box;
  border: 4px solid #ed1c24;
}

.mark-view {
  left: 214px;
  top: 32px;
  width: 60px;
  height: 24px;
}

.mark-dialog {
  left: 20px;
  top: 95px;
  width: 325px;
  height: 354px;
  border-width: 4px 4px 5px;
}

.mark-options {
  left: 929px;
  top: 218px;
  width: 57px;
  height: 71px;
  border-width: 5px;
}
</style>
